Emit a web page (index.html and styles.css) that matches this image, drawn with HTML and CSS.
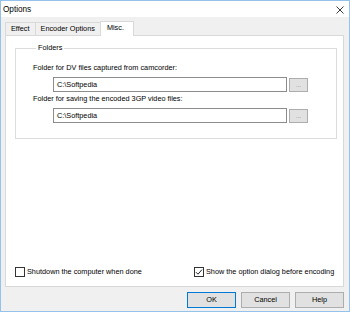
FILE: index.html
```html
<!DOCTYPE html>
<html lang="en">
<head>
    <meta charset="UTF-8">
    <title>Options</title>
    <link rel="stylesheet" href="styles.css">
</head>
<body>
    <div class="window">
        <div class="titlebar">
            <span class="title">Options</span>
            <svg class="close" width="8" height="8" viewBox="0 0 8 8">
                <path d="M0.5 0.5 L7.5 7.5 M7.5 0.5 L0.5 7.5" stroke="#222" stroke-width="0.9" fill="none"/>
            </svg>
        </div>

        <div class="dialog">
            <div class="tabs">
                <div class="tab">Effect</div>
                <div class="tab">Encoder Options</div>
                <div class="tab active">Misc.</div>
            </div>

            <div class="panel">
                <fieldset class="group">
                    <legend>Folders</legend>

                    <div class="field-label">Folder for DV files captured from camcorder:</div>
                    <div class="field-row">
                        <div class="textbox">C:\Softpedia</div>
                        <div class="browse">...</div>
                    </div>

                    <div class="field-label">Folder for saving the encoded 3GP video files:</div>
                    <div class="field-row">
                        <div class="textbox">C:\Softpedia</div>
                        <div class="browse">...</div>
                    </div>
                </fieldset>

                <div class="checks">
                    <label class="check">
                        <span class="box"></span>
                        Shutdown the computer when done
                    </label>
                    <label class="check">
                        <span class="box checked">
                            <svg width="8" height="8" viewBox="0 0 8 8">
                                <path d="M1 4.2 L3 6.2 L7 1.6" stroke="#222" stroke-width="1" fill="none"/>
                            </svg>
                        </span>
                        Show the option dialog before encoding
                    </label>
                </div>
            </div>

            <div class="buttons">
                <div class="btn default">OK</div>
                <div class="btn">Cancel</div>
                <div class="btn">Help</div>
            </div>
        </div>
    </div>
</body>
</html>
```

FILE: styles.css
```css
:root {
    --frame:      #95c2ea;
    --face:       #f0f0f0;
    --line:       #d9d9d9;
    --group-line: #dcdcdc;
    --edit-line:  #8c8c8c;
    --btn:        #e1e1e1;
    --btn-line:   #adadad;
    --accent:     #0078d7;
    --text:       #000;
}

* {
    box-sizing: border-box;
    margin: 0;
    padding: 0;
}

body {
    background: #fff;
    font-family: 'Liberation Sans', Arial, sans-serif;
    font-size: 7.3px;
    color: var(--text);
}

/* ── Window frame ── */
.window {
    width: 350px;
    height: 312px;
    border: 1px solid var(--frame);
    display: flex;
    flex-direction: column;
    background: var(--face);
}

.titlebar {
    height: 16px;
    background: #fff;
    display: flex;
    align-items: center;
    justify-content: space-between;
    padding: 0 5px 0 2px;
}

.title {
    font-size: 8.2px;
    margin-top: 1px;
}

.close {
    margin-top: 2px;
}

/* ── Dialog body ── */
.dialog {
    flex: 1;
    display: flex;
    flex-direction: column;
    padding: 4px 5px 3px 4px;
}

.tabs {
    display: flex;
    align-items: flex-end;
    height: 14px;
}

.tab {
    height: 13px;
    line-height: 12px;
    padding: 0 5px;
    border: 1px solid var(--line);
    border-bottom: none;
    background: var(--face);
    white-space: nowrap;
}

.tab + .tab {
    border-left: none;
}

.tab.active {
    position: relative;
    height: 15px;
    margin-bottom: -1px;
    margin-left: -1px;
    border-left: 1px solid var(--line);
    padding: 0 9px 0 6px;
    background: #fff;
    z-index: 1;
}

.panel {
    height: 252px;
    background: #fff;
    border: 1px solid var(--line);
    display: flex;
    flex-direction: column;
    padding: 0 9px 9px 9px;
}

/* ── Group box ── */
.group {
    margin: 7px -3px 0 0;
    border: 1px solid var(--group-line);
    padding: 0 0 15px 17px;
}

.group legend {
    line-height: 10px;
    padding: 0 2px;
    margin-left: 3px;
}

.field-label {
    line-height: 10px;
    margin-top: 10px;
    white-space: nowrap;
}

.field-label + .field-row {
    margin-top: 4px;
}

.group .field-row + .field-label {
    margin-top: 2px;
}

.field-row {
    display: flex;
    align-items: flex-start;
    gap: 2px;
    padding-left: 20px;
}

.textbox {
    width: 234px;
    height: 15px;
    line-height: 13px;
    border: 1px solid var(--edit-line);
    padding-left: 3px;
    background: #fff;
}

.browse {
    width: 19px;
    height: 14px;
    margin-top: 1px;
    border: 1px solid var(--btn-line);
    background: var(--btn);
    color: #777;
    font-size: 6px;
    text-align: center;
    line-height: 12px;
}

/* ── Checkboxes ── */
.checks {
    margin-top: auto;
    display: grid;
    grid-template-columns: 179px 1fr;
}

.check {
    display: flex;
    align-items: center;
    gap: 2px;
    line-height: 10px;
    white-space: nowrap;
}

.box {
    flex: none;
    width: 10px;
    height: 10px;
    border: 1px solid #333;
    background: #fff;
    display: flex;
    align-items: center;
    justify-content: center;
}

/* ── Bottom buttons ── */
.buttons {
    margin-top: 5px;
    display: flex;
    justify-content: flex-end;
    gap: 5px;
}

.btn {
    width: 49px;
    height: 16px;
    line-height: 14px;
    text-align: center;
    border: 1px solid var(--btn-line);
    background: var(--btn);
}

.btn.default {
    border: 1px solid var(--accent);
}
```
